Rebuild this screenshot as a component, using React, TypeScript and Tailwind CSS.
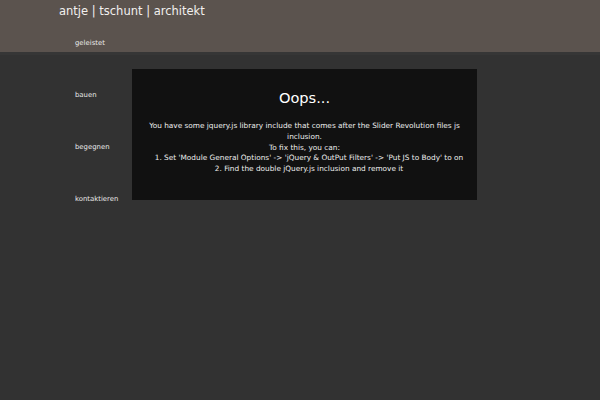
export default function App() {
  return (
    <div className="h-[400px] w-[600px] overflow-hidden bg-[linear-gradient(to_bottom,#5b534e_0px,#5b534e_52px,#363636_52px,#363636_55px,#323232_55px)] font-['DejaVu_Sans',sans-serif] text-white">
      <header className="pl-[59px] pt-[2px]">
        <h1 className="text-[11.5px] leading-[18px] text-[#f2f0ee]">antje | tschunt | architekt</h1>
      </header>
      <div className="flex">
        <nav className="ml-[75px] flex w-[57px] flex-col gap-[40.8px] pt-[18.4px] text-[6.9px] leading-[11px] text-[#e8e8e8]">
          <a>geleistet</a>
          <a>bauen</a>
          <a>begegnen</a>
          <a>kontaktieren</a>
        </nav>
        <div className="mt-[49px] flex h-[131px] w-[345px] flex-col items-center bg-[#111111] pt-[19px] text-center">
          <h2 className="text-[14.6px] leading-[20px]">Oops...</h2>
          <div className="mt-[13px] text-[7.35px] leading-[10.75px] text-[#eeeeee]">
            <p>You have some jquery.js library include that comes after the Slider Revolution files js inclusion.</p>
            <p>To fix this, you can:</p>
            <ol className="pl-[9px]">
              <li>1. Set 'Module General Options' -&gt; 'jQuery &amp; OutPut Filters' -&gt; 'Put JS to Body' to on</li>
              <li>2. Find the double jQuery.js inclusion and remove it</li>
            </ol>
          </div>
        </div>
      </div>
    </div>
  );
}
